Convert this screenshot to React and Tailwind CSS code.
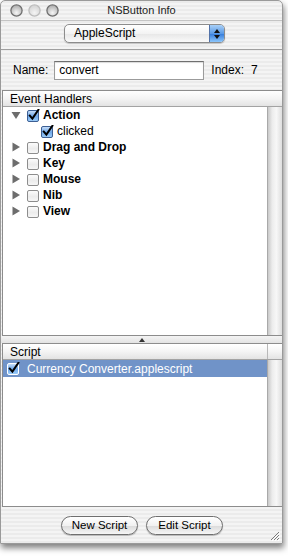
import React from 'react';

const stripes =
	'bg-[repeating-linear-gradient(0deg,#ebebeb_0px,#ebebeb_2px,#f4f4f4_2px,#f4f4f4_4px)]';

function Light({ dim }) {
	return (
		<svg width="13" height="13" viewBox="0 0 13 13">
			<defs>
				<radialGradient id={dim ? 'lg2' : 'lg1'} cx="50%" cy="70%" r="60%">
					<stop offset="0%" stopColor={dim ? '#f4f4f4' : '#f6f6f6'} />
					<stop offset="100%" stopColor={dim ? '#d6d6d6' : '#b4b4b4'} />
				</radialGradient>
			</defs>
			<circle
				cx="6.5"
				cy="6.5"
				r="5.6"
				fill={`url(#${dim ? 'lg2' : 'lg1'})`}
				stroke={dim ? '#bdbdbd' : '#6f6f6f'}
				strokeWidth="1.3"
			/>
		</svg>
	);
}

function Triangle({ open }) {
	return (
		<svg width="10" height="10" viewBox="0 0 10 10">
			{open ? (
				<polygon points="0.5,2 9.5,2 5,9" fill="#6d6d6d" />
			) : (
				<polygon points="1.5,0.5 9,5 1.5,9.5" fill="#6d6d6d" />
			)}
		</svg>
	);
}

function Check({ on, light }) {
	return (
		<svg width="13" height="13" viewBox="0 0 13 13">
			<defs>
				<linearGradient id="cbOn" x1="0" y1="0" x2="0" y2="1">
					<stop offset="0%" stopColor="#cfe3fa" />
					<stop offset="50%" stopColor="#6ea6e8" />
					<stop offset="100%" stopColor="#9fd0fb" />
				</linearGradient>
				<linearGradient id="cbOff" x1="0" y1="0" x2="0" y2="1">
					<stop offset="0%" stopColor="#fdfdfd" />
					<stop offset="55%" stopColor="#ececec" />
					<stop offset="100%" stopColor="#f8f8f8" />
				</linearGradient>
			</defs>
			<rect
				x="0.5"
				y="1.5"
				width="11"
				height="11"
				rx="1.5"
				fill={on ? 'url(#cbOn)' : 'url(#cbOff)'}
				stroke={light ? '#ffffff' : on ? '#3d5f93' : '#8d8d8d'}
			/>
			{on && (
				<path
					d="M2.8 6.6 L5.4 9.6 L11.4 0.8"
					fill="none"
					stroke="#000"
					strokeWidth="2"
					strokeLinecap="square"
				/>
			)}
		</svg>
	);
}

function TreeRow({ open, on, label, child }) {
	return (
		<div className="flex h-[16px] items-center">
			{child ? (
				<div className="w-[38px]" />
			) : (
				<div className="flex w-[24px] justify-end pr-[6px]">
					<Triangle open={open} />
				</div>
			)}
			<Check on={on} />
			<span className={child ? 'ml-[3px]' : 'ml-[3px] font-bold'}>{label}</span>
		</div>
	);
}

function Scroller() {
	return (
		<div className="w-[15px] border-l border-[#a9a9a9] bg-[linear-gradient(90deg,#c9c9c9,#ececec_30%,#f7f7f7_60%,#dedede)]" />
	);
}

function Header({ title, corner }) {
	return (
		<div className="flex h-[16px] border-b border-[#a3a3a3] bg-[linear-gradient(#ffffff,#f4f4f4_50%,#e3e3e3)]">
			<div className="flex-1 pl-[7px] leading-[16px]">{title}</div>
			{corner && <div className="w-[15px] border-l border-[#b8b8b8]" />}
		</div>
	);
}

function AquaButton({ children }) {
	return (
		<div className="flex h-[19px] w-[77px] items-center justify-center rounded-full border border-[#6f6f6f] bg-[linear-gradient(#ffffff,#f1f1f1_50%,#dcdcdc_55%,#f6f6f6)] text-[11.5px] shadow-[0_1px_1px_rgba(0,0,0,0.25)]">
			{children}
		</div>
	);
}

export default function App() {
	return (
		<div className="h-[559px] w-[288px] bg-white font-['Liberation_Sans',Arial,sans-serif] text-[12px] text-black">
			<div
				className={`flex h-[544px] w-[283px] flex-col overflow-hidden rounded-t-[5px] border border-[#9a9a9a] shadow-[1px_4px_6px_rgba(0,0,0,0.5)] ${stripes}`}
			>
				{/* title bar */}
				<div className="grid h-[20px] grid-cols-[1fr_auto_1fr] items-center border-b border-[#c4c4c4]">
					<div className="flex gap-[5px] pl-[9px]">
						<Light />
						<Light dim />
						<Light />
					</div>
					<div className="text-[11px] text-[#222]">NSButton Info</div>
					<div />
				</div>

				{/* popup */}
				<div className="flex h-[29px] border-b border-[#9f9f9f] pl-[63px] pt-[3px]">
					<div className="flex h-[19px] w-[161px] overflow-hidden rounded-[5px] border border-[#8c8c8c] bg-[linear-gradient(#ffffff,#f3f3f3_50%,#e8e8e8_55%,#fafafa)] shadow-[0_1px_1px_rgba(0,0,0,0.2)]">
						<div className="flex-1 pl-[9px] leading-[17px]">AppleScript</div>
						<div className="flex w-[15px] flex-col items-center justify-center gap-[2px] border-l border-[#5272a8] bg-[linear-gradient(#a9d0f7,#5a9ae6_50%,#3a80dd_55%,#8cc6fb)]">
							<svg width="6" height="4" viewBox="0 0 6 4">
								<polygon points="0,4 6,4 3,0" fill="#111" />
							</svg>
							<svg width="6" height="4" viewBox="0 0 6 4">
								<polygon points="0,0 6,0 3,4" fill="#111" />
							</svg>
						</div>
					</div>
				</div>

				{/* name row */}
				<div className="flex h-[40px] items-center pl-[12px]">
					<span>Name:</span>
					<div className="ml-[6px] flex h-[19px] w-[150px] items-center border border-[#9b9b9b] border-t-[#6f6f6f] bg-white pl-[4px] shadow-[inset_0_1px_1px_rgba(0,0,0,0.15)]">
						convert
					</div>
					<span className="ml-[7px]">Index:</span>
					<span className="ml-[7px]">7</span>
				</div>

				{/* event handlers */}
				<div className="ml-[1px] flex flex-col border-y border-l border-[#8c8c8c]">
					<Header title="Event Handlers" />
					<div className="flex h-[228px]">
						<div className="flex-1 bg-white">
							<TreeRow open on label="Action" />
							<TreeRow child on label="clicked" />
							<TreeRow label="Drag and Drop" />
							<TreeRow label="Key" />
							<TreeRow label="Mouse" />
							<TreeRow label="Nib" />
							<TreeRow label="View" />
						</div>
						<Scroller />
					</div>
				</div>

				{/* split divider */}
				<div className="flex h-[7px] items-center justify-center bg-[linear-gradient(#f4f4f4,#e2e2e2)]">
					<svg width="6" height="4" viewBox="0 0 6 4">
						<polygon points="0,4 6,4 3,0" fill="#333" />
					</svg>
				</div>

				{/* script list */}
				<div className="ml-[1px] flex flex-col border-y border-l border-[#8c8c8c]">
					<Header title="Script" corner />
					<div className="flex h-[146px]">
						<div className="flex-1 bg-white">
							<div className="flex h-[17px] items-center bg-[#7093c8] pl-[4px] text-white">
								<Check on light />
								<span className="ml-[7px]">Currency Converter.applescript</span>
							</div>
						</div>
						<Scroller />
					</div>
				</div>

				{/* buttons */}
				<div className="relative flex flex-1 items-center justify-center gap-[8px] pl-[1px] pt-[1px]">
					<AquaButton>New Script</AquaButton>
					<AquaButton>Edit Script</AquaButton>
					<svg className="absolute bottom-[2px] right-[2px]" width="11" height="11" viewBox="0 0 11 11">
						<path d="M10 2 L2 10 M10 5 L5 10 M10 8 L8 10" stroke="#7a7a7a" strokeWidth="1" />
						<path d="M11 3 L3 11 M11 6 L6 11 M11 9 L9 11" stroke="#ffffff" strokeWidth="1" />
					</svg>
				</div>
			</div>
		</div>
	);
}
